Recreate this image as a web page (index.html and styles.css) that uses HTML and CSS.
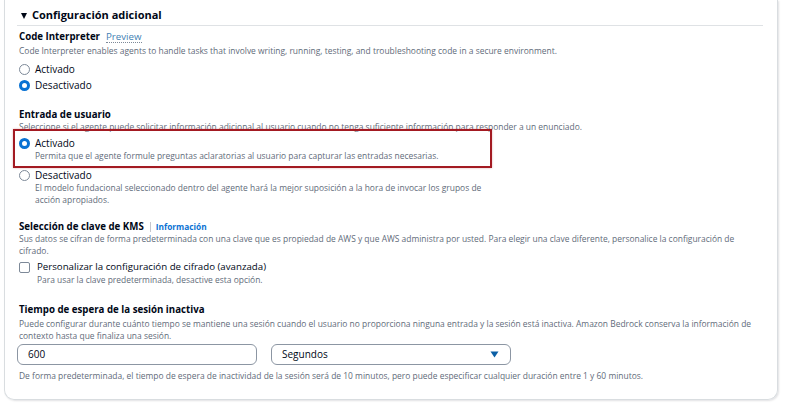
FILE: index.html
```html
<!DOCTYPE html>
<html lang="es">
<head>
<meta charset="utf-8">
<link rel="stylesheet" href="styles.css">
</head>
<body>
<div class="card">
  <div class="header"><span class="caret"></span><span>Configuración adicional</span></div>
  <div class="divider"></div>

  <section class="sec sec-code">
    <div class="title">Code Interpreter <span class="preview">Preview</span></div>
    <div class="desc desc-code">Code Interpreter enables agents to handle tasks that involve writing, running, testing, and troubleshooting code in a secure environment.</div>
    <div class="radios radios-code">
      <div class="opt"><span class="radio"></span><span class="lbl">Activado</span></div>
      <div class="opt opt2"><span class="radio on"></span><span class="lbl">Desactivado</span></div>
    </div>
  </section>

  <section class="sec sec-user">
    <div class="title">Entrada de usuario</div>
    <div class="desc">Seleccione si el agente puede solicitar información adicional al usuario cuando no tenga suficiente información para responder a un enunciado.</div>
    <div class="opt opt-a">
      <div class="optrow"><span class="radio on"></span><span class="lbl">Activado</span></div>
      <div class="desc optdesc">Permita que el agente formule preguntas aclaratorias al usuario para capturar las entradas necesarias.</div>
      <div class="highlight"></div>
    </div>
    <div class="opt opt-b">
      <div class="optrow"><span class="radio"></span><span class="lbl">Desactivado</span></div>
      <div class="desc optdesc narrow">El modelo fundacional seleccionado dentro del agente hará la mejor suposición a la hora de invocar los grupos de acción apropiados.</div>
    </div>
  </section>

  <section class="sec sec-kms">
    <div class="title">Selección de clave de KMS <span class="sep"></span><span class="info">Información</span></div>
    <div class="desc">Sus datos se cifran de forma predeterminada con una clave que es propiedad de AWS y que AWS administra por usted. Para elegir una clave diferente, personalice la configuración de cifrado.</div>
    <div class="check">
      <div class="optrow"><span class="box"></span><span class="lbl lbl-big">Personalizar la configuración de cifrado (avanzada)</span></div>
      <div class="desc optdesc cdesc">Para usar la clave predeterminada, desactive esta opción.</div>
    </div>
  </section>

  <section class="sec sec-time">
    <div class="title">Tiempo de espera de la sesión inactiva</div>
    <div class="desc">Puede configurar durante cuánto tiempo se mantiene una sesión cuando el usuario no proporciona ninguna entrada y la sesión está inactiva. Amazon Bedrock conserva la información de contexto hasta que finaliza una sesión.</div>
    <div class="fields">
      <div class="input">600</div>
      <div class="select"><span>Segundos</span><svg class="tri" width="9" height="7" viewBox="0 0 9 7"><path d="M0.5 0.5 H8.5 L4.5 6.5 Z" fill="#0b5fa5"/></svg></div>
    </div>
    <div class="desc help">De forma predeterminada, el tiempo de espera de inactividad de la sesión será de 10 minutos, pero puede especificar cualquier duración entre 1 y 60 minutos.</div>
  </section>
</div>
</body>
</html>
```

FILE: styles.css
```css
* { box-sizing: border-box; }
html, body { margin: 0; padding: 0; background: #ffffff; }
body {
  font-family: "Open Sans", "Noto Sans", sans-serif;
  color: #000716;
  width: 800px;
  height: 409px;
  overflow: hidden;
}
.card {
  margin-left: 4px;
  width: 774px;
  border: 1px solid #d9dde0;
  border-top: none;
  border-radius: 0 0 10px 10px;
  box-shadow: 1px 1px 2px rgba(0, 7, 22, 0.12);
  padding: 7px 14px 17px 14px;
  position: relative;
}
.header {
  display: flex;
  align-items: center;
  height: 16px;
  font-size: 11px;
  font-weight: 700;
  line-height: 16px;
  padding-left: 2px;
}
.caret {
  width: 0; height: 0;
  border-left: 3.5px solid transparent;
  border-right: 3.5px solid transparent;
  border-top: 6px solid #000716;
  margin-right: 5px;
  margin-top: 1px;
}
.divider {
  height: 1px;
  background: #dfe2e5;
  margin: 2px 0 0 -2px;
}
.title {
  font-size: 9.7px;
  font-weight: 700;
  line-height: 12px;
  white-space: nowrap;
  display: flex;
  align-items: center;
}
.preview {
  font-weight: 400;
  color: #3f7fb4;
  margin-left: 6px;
  border-bottom: 1px dotted #7d8998;
  line-height: 11px;
}
.sep {
  display: inline-block;
  width: 1px;
  height: 10px;
  background: #c6c6cd;
  margin: 0 5px 0 6px;
}
.info {
  font-size: 8.3px;
  font-weight: 700;
  color: #0972d3;
}
.desc {
  font-size: 8.45px;
  line-height: 12px;
  color: #5f6b7a;
}
.sec-code { margin-top: 5px; }
.desc-code { margin-top: 2px; }
.radios-code { margin-top: 5px; }
.opt { display: flex; align-items: center; }
.opt2 { margin-top: 2px; }
.optrow { display: flex; align-items: center; height: 14px; }
.radio {
  width: 11px; height: 11px;
  border-radius: 50%;
  border: 1.5px solid #7d8998;
  background: #fff;
  margin-right: 5px;
  flex: none;
}
.radio.on { border: 3.5px solid #0972d3; }
.lbl { font-size: 10px; line-height: 14px; }
.radios-code .opt { height: 14px; }

.sec-user { margin-top: 17px; }
.sec-user .opt { display: block; position: relative; }
.opt-a { margin-top: 3px; }
.opt-b { margin-top: 6px; }
.optdesc { padding-left: 16px; }
.narrow { max-width: 468px; }
.highlight {
  position: absolute;
  left: -6px;
  top: -7px;
  width: 479px;
  height: 39px;
  border: 2px solid #a31a22;
  box-shadow: 0 0 2px rgba(163, 26, 34, 0.35);
  pointer-events: none;
}

.sec-kms { margin-top: 15px; }
.check { margin-top: 3px; }
.box {
  width: 11px; height: 11px;
  border: 1.5px solid #7d8998;
  border-radius: 2px;
  margin-right: 7px;
  flex: none;
}
.lbl-big { font-size: 9.7px; }
.cdesc { padding-left: 18px; }

.sec-time { margin-top: 18px; }
.sec-time .desc { margin-top: 2px; }
.fields {
  display: flex;
  gap: 14px;
  margin-top: 2px;
  margin-left: -2px;
}
.input, .select {
  width: 240px;
  height: 21px;
  border: 1px solid #8c96a3;
  border-radius: 6px;
  background: #fff;
  font-size: 10px;
  line-height: 19px;
  padding-left: 10px;
}
.select {
  display: flex;
  justify-content: space-between;
  align-items: center;
  padding-right: 11px;
}
.sec-time .help { margin-top: 5px; }
```
